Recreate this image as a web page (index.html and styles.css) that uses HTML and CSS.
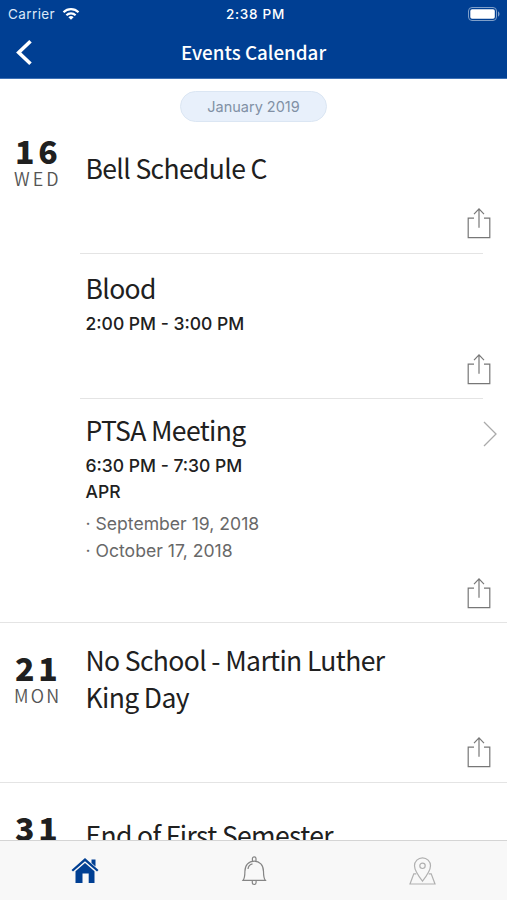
FILE: index.html
```html
<!DOCTYPE html>
<html lang="en">
<head>
<meta charset="utf-8">
<title>Events Calendar</title>
<link rel="stylesheet" href="styles.css">
</head>
<body>
<svg width="0" height="0" class="defs">
  <symbol id="share" viewBox="0 0 26 32"><path d="M8 11.2H2.2v19.5h21.6V11.2H18M13 20.8V2M8 7.2l5-5.3 5 5.3"/></symbol>
</svg>
<div class="app">
  <header class="top">
    <div class="status">
      <div class="carrier"><span>Carrier</span>
        <svg class="wifi" width="18" height="14" viewBox="0 0 18 14"><path d="M1.5 5.2a10.8 10.8 0 0 1 15 0M4.4 8.2a6.6 6.6 0 0 1 9.2 0"/><path class="dot" d="M9 12.8 6.4 10.2a3.8 3.8 0 0 1 5.2 0z"/></svg>
      </div>
      <span class="clock">2:38 PM</span>
      <svg class="battery" width="34" height="16" viewBox="0 0 34 16"><rect class="shell" x="1.5" y="1.5" width="28" height="13" rx="3.5"/><rect class="charge" x="3.3" y="3.3" width="24.5" height="9.4" rx="1.8"/><path class="tip" d="M31 5.5c2 .5 2 4.500 0 5z"/></svg>
    </div>
    <div class="nav">
      <svg class="back" width="20" height="28" viewBox="0 0 20 28"><path d="M16.500 3.200 4.700 14.500l11.800 11.300"/></svg>
      <h1>Events Calendar</h1>
    </div>
  </header>
  <main class="list">
    <div class="month">January 2019</div>
    <section class="day">
      <div class="date"><b>16</b><span>WED</span></div>
      <div class="events">
        <article class="event bell"><h2>Bell Schedule C</h2><svg class="share"><use href="#share"/></svg></article>
        <article class="event blood"><h2>Blood</h2><p class="time">2:00 PM - 3:00 PM</p><svg class="share"><use href="#share"/></svg></article>
        <article class="event ptsa">
          <div class="head"><h2>PTSA Meeting</h2><svg class="more" width="16" height="28" viewBox="0 0 16 28"><path d="M2 2l12 12L2 26"/></svg></div>
          <p class="time">6:30 PM - 7:30 PM</p><p class="time">APR</p>
          <p class="note first">· September 19, 2018</p><p class="note">· October 17, 2018</p>
          <svg class="share"><use href="#share"/></svg>
        </article>
      </div>
    </section>
    <section class="day mon">
      <div class="date"><b>21</b><span>MON</span></div>
      <div class="events"><article class="event"><h2>No School - Martin Luther<br>King Day</h2><svg class="share"><use href="#share"/></svg></article></div>
    </section>
    <section class="day last">
      <div class="date"><b>31</b></div>
      <div class="events"><article class="event"><h2>End of First Semester</h2></article></div>
    </section>
  </main>
  <nav class="tabs">
    <svg class="home" width="30" height="28" viewBox="0 0 30 28"><path d="M15 1 28.500 13l-1.500 1.500L15 4.200 3 14.500 1.500 13zM21.500 2.500h4v7l-4-3.600zM15 6l9.500 8.300V26h-5.800v-9.500h-6.200V26H5.500V14.300z"/></svg>
    <svg class="bell-icon" width="30" height="32" viewBox="0 0 30 32"><path d="M4 25.400c1.800-2.200 1.900-4.400 1.900-8.900C5.900 10 9.800 6.200 15.200 6.200s9.300 3.800 9.300 10.300c0 4.500.1 6.700 1.900 8.900zM13.400 6.200V3.600a1.800 1.800 0 0 1 3.600 0v2.600M13.300 25.400v2.200a1.900 1.900 0 0 0 3.800 0v-2.200M9 14c.3-2.800 1.800-4.600 4.500-5.200"/></svg>
    <svg class="pin" width="28" height="30" viewBox="0 0 28 30"><path d="M13.500 25.200C8.500 18.800 5.500 14 5.500 9.800a8 8 0 0 1 16 0c0 4.200-3 9-8 15.400z"/><circle cx="13.500" cy="9.800" r="2.700"/><path d="M7.300 17.800H4.800L1 28h25l-3.800-10.200h-2.500"/></svg>
  </nav>
</div>
</body>
</html>
```
FILE: styles.css
```css
* { box-sizing: border-box; }
body { margin: 0; font-family: Inter, "Liberation Sans", sans-serif; color: #202020; background: #fff; }
h1, h2, p { margin: 0; }
svg { display: block; fill: none; flex: none; }
.defs { position: absolute; }
.app { width: 507px; height: 900px; display: flex; flex-direction: column; overflow: hidden; }

.top { height: 79px; flex: none; background: #003f93; color: #fff; border-bottom: 1px solid #3d70b5; }
.status { height: 27px; display: grid; grid-template-columns: 1fr auto 1fr; align-items: center; padding: 0 6px 0 8px; font-size: 13.5px; }
.carrier { display: flex; align-items: center; gap: 7px; letter-spacing: .4px; color: #dce8f8; }
.wifi { stroke: #fff; stroke-width: 2.200; }
.wifi .dot { fill: #fff; stroke: none; }
.clock { font-weight: 550; letter-spacing: .75px; padding-left: 2px; }
.battery { justify-self: end; }
.shell { stroke: #7f9fc9; }
.charge { fill: #fff; }
.tip { fill: #7f9fc9; }
.nav { height: 50px; display: grid; grid-template-columns: 1fr auto 1fr; align-items: center; padding-left: 14px; padding-right: 14px; }
.back { stroke: #fff; stroke-width: 3.600; }
h1 { font: 500 18.800px/30px "Noto Sans CJK SC", sans-serif; }

.list { flex: 1; min-height: 0; overflow: hidden; }
.month { width: 147px; height: 31px; margin: 12px auto 0 180px; border: 1px solid #dbe6f3; border-radius: 16px; background: #e8f0fb; color: #8190a5; font-size: 14.500px; line-height: 29px; text-align: center; }
.day { display: flex; height: 501px; border-bottom: 1px solid #e4e4e4; }
.date { width: 80px; padding-top: 12px; padding-left: 14px; flex: none; }
.date b { display: block; font: 900 32px/32px "Noto Sans CJK SC", sans-serif; letter-spacing: 3.800px; padding-left: 1px; }
.date span { display: block; padding-top: 1px; font: 350 18px/22px "Noto Sans CJK SC", sans-serif; letter-spacing: 3px; color: #555; }
.mon .date span { letter-spacing: 2.200px; }
.events { flex: 1; }
.event { display: flex; flex-direction: column; padding: 0 15px 14px 6px; height: 100%; }
h2 { font: 400 26.500px/36.500px "Noto Sans CJK SC", sans-serif; letter-spacing: -.63px; margin-left: -.5px; }
.bell { height: 132px; padding-top: 28px; }
.blood { height: 145px; padding-top: 16px; }
.ptsa { height: 224px; padding-top: 13px; }
.bell, .blood { border-bottom: 1px solid #e4e4e4; margin-right: 24px; padding-right: 0; }
.blood { padding-bottom: 13px; }
.bell .share, .blood .share { margin-right: -9px; }
.share { width: 26px; height: 32px; margin-top: auto; align-self: flex-end; stroke: #777; stroke-width: 1.200; }
.time { font-size: 17.500px; line-height: 26px; font-weight: 500; margin-left: -.5px; }
h2 + .time { margin-top: 4px; }
.head { display: flex; justify-content: space-between; align-items: flex-start; margin-right: -6px; margin-bottom: 4px; }
.more { stroke: #aaa; stroke-width: 1.300; margin: 8px 0 0; }
.note { font-size: 17.600px; line-height: 27.500px; color: #686868; margin-left: -.5px; }
.first { margin-top: 5px; }
.mon { height: 160px; }
.mon .date { padding-top: 28px; }
.mon .event { padding-top: 19px; }
.last { height: 160px; }
.last .date { padding-top: 28px; }
.last .event { padding-top: 34px; }

.tabs { height: 60px; flex: none; display: grid; grid-template-columns: repeat(3, 1fr); justify-items: center; align-items: center; background: #f8f8f8; border-top: 1px solid #d5d5d5; }
.home { fill: #003f93; }
.bell-icon { stroke: #858585; stroke-width: 1.200; }
.pin { stroke: #b0b0b0; stroke-width: 1.200; }
```
